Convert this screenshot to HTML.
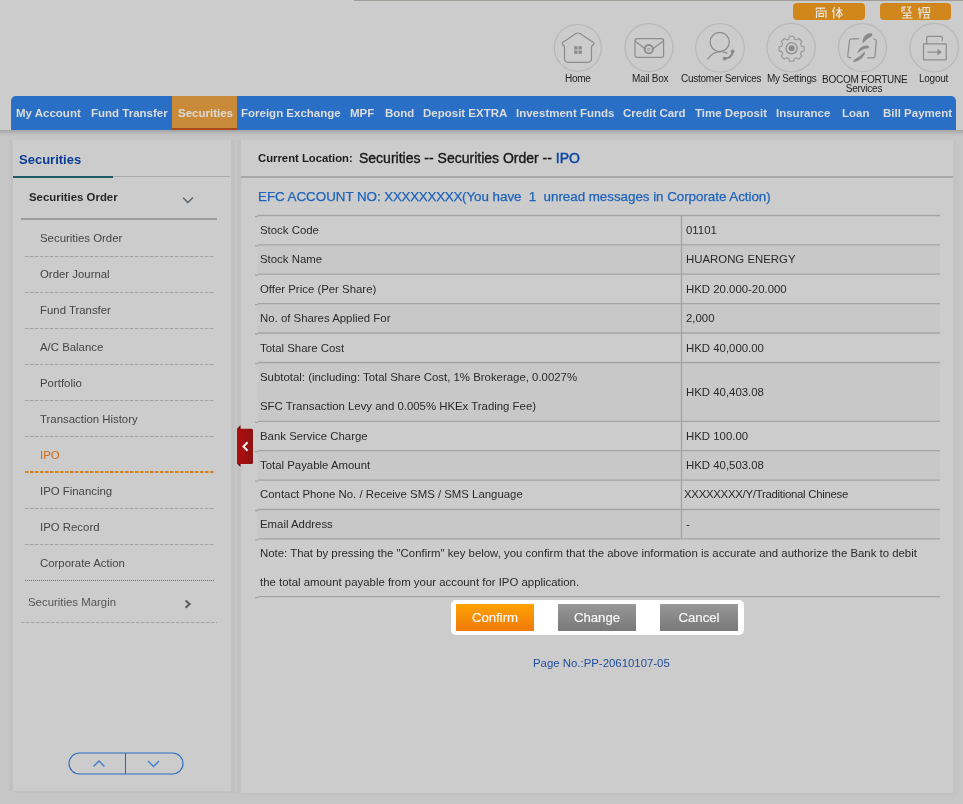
<!DOCTYPE html>
<html><head><meta charset="utf-8">
<style>
*{margin:0;padding:0;box-sizing:border-box}
html,body{width:963px;height:804px;overflow:hidden;background:#c6c6c6;font-family:"Liberation Sans",sans-serif}
.abs{position:absolute}
#hdr{position:absolute;left:0;top:0;width:963px;height:130px;background:#cccccc}
#topline{position:absolute;left:354px;top:0;width:609px;height:1px;background:#9b9d96}
.lang{position:absolute;top:3px;height:17px;background:#d0861a;border-radius:4px}
.ic{position:absolute;top:23px;width:49px;height:49px}
.lbl{position:absolute;top:74px;font-size:10px;color:#1e1e1e;text-align:center;white-space:nowrap;line-height:10.5px;letter-spacing:-0.25px}
#nav{position:absolute;left:11px;top:96px;width:945px;height:34px;background:#2a6fc6;border-radius:5px 5px 0 0}
#navshadow{position:absolute;left:0;top:130px;width:963px;height:6px;background:linear-gradient(#a4a4a4,#bcbcbc 60%,#c4c4c4)}
.ni{position:absolute;top:0;height:34px;line-height:34px;font-size:11.5px;font-weight:bold;color:#dcdcdc;white-space:nowrap}
#sec{position:absolute;left:172px;top:96px;width:65px;height:34px;background:#c98a3a;border-bottom:2px solid #a84a1a}
#side{position:absolute;left:13px;top:140px;width:218px;height:651px;background:#cccccc}
#main{position:absolute;left:241px;top:140px;width:712px;height:653px;background:#cccccc}
.si{position:absolute;left:40px;font-size:11.4px;color:#444;white-space:nowrap}
.dash{position:absolute;left:25px;width:192px;height:0;border-top:1px dashed #a9a9a9}
.row{position:absolute;left:258px;width:682px;border-top:1.3px solid #a6a6a6}
.cell{position:absolute;font-size:11.4px;color:#2a2a2a;white-space:nowrap}
.tick{position:absolute;left:255px;width:3px;height:1px;background:#a6a6a6}
.stripe{position:absolute;left:258px;width:682px;background:#c8c8c8}
.btn{position:absolute;top:604px;height:27px;line-height:27.4px;text-align:center;color:#fafafa;font-size:13.2px;-webkit-text-stroke:0.15px #fafafa}
</style></head><body><div id="wrap" style="position:absolute;left:0;top:0;width:963px;height:804px;will-change:transform">
<div id="hdr"></div>
<div id="topline"></div>
<div class="lang" style="left:793px;width:72px"></div>
<div class="lang" style="left:880px;width:71px"></div>

<svg class="abs" style="left:0;top:0" width="963" height="96" viewBox="0 0 963 96">
 <g fill="none" stroke="#b9b9b9" stroke-width="1.25">
  <circle cx="577.8" cy="47.8" r="23.5"/>
  <circle cx="649" cy="47.5" r="24"/>
  <circle cx="720" cy="47.8" r="24.3"/>
  <circle cx="791.1" cy="47.6" r="24.2"/>
  <circle cx="862.5" cy="47.6" r="24"/>
  <circle cx="934.2" cy="47.6" r="24.3"/>
 </g>
 <g fill="none" stroke="#8c8c8c" stroke-width="1.2" stroke-linejoin="round" stroke-linecap="round">
  <!-- home -->
  <path d="M564.5 46.5 L562.5 44.5 Q561.5 43.2 563 42.2 L576 33.6 Q578 32.4 580 33.6 L593 42.2 Q594.5 43.2 593.5 44.5 L591.5 46.5 L591.5 58.5 Q591.5 62.3 587.7 62.3 L568.3 62.3 Q564.5 62.3 564.5 58.5 Z"/>
  <!-- mail -->
  <rect x="635" y="38.6" width="28.6" height="18.8" rx="2.2"/>
  <path d="M635.5 41.5 L645.5 49 M662.8 41.5 L652.5 49"/>
  <circle cx="648.8" cy="49.2" r="4.2" stroke-width="1.9"/>
  <path d="M647.4 48.6 h2.8 M647.4 50.2 h2.8" stroke-width="0.7"/>
  <!-- customer -->
  <circle cx="719.7" cy="42" r="9.6"/>
  <path d="M707.7 59 Q713 51 722 51.6 Q725.5 52 727 53.3"/>
  <path d="M732.8 51.6 A7.6 7.6 0 0 1 724.8 58.4" stroke-width="2.2"/>
  <!-- gear -->
  <circle cx="791.6" cy="48.3" r="5.6"/>
  <!-- logout -->
  <rect x="923.5" y="43.9" width="22.7" height="15.9" rx="0.3"/>
  <path d="M926.7 43.6 L926.7 37.8 Q926.7 36.3 928.2 36.3 L940.8 36.3 Q942.3 36.3 942.3 37.8 L942.3 40.5"/>
  <path d="M928 52.1 L938.5 52.1"/>
  <!-- fortune brackets -->
  <path d="M858.5 38.8 L851.5 38.8 Q849.8 38.8 849.5 40.5 L847.8 55.5 Q847.5 57.6 849.8 57.6 L850.7 57.6"/>
  <path d="M873.8 39 Q876.3 39 876.3 41.5 L875 56.3 Q874.7 57.8 872.8 57.8 L867.5 57.8"/>
 </g>
 <g fill="#8a8a8a">
  <rect x="574.2" y="46.2" width="3.3" height="3.3"/><rect x="578.5" y="46.2" width="3.3" height="3.3"/>
  <rect x="574.2" y="50.5" width="3.3" height="3.3"/><rect x="578.5" y="50.5" width="3.3" height="3.3"/>
  <circle cx="791.6" cy="48.3" r="3"/>
  <circle cx="732.6" cy="51.3" r="1.9"/><circle cx="724.6" cy="58.6" r="1.9"/>
  <path d="M937.5 48.8 L941.8 52.1 L937.5 55.4 Z"/>
  <!-- fortune leaves -->
  <path d="M862.6 43.6 Q861.8 38 866.5 34.6 Q869.5 32.6 871.8 33.6 Q873.4 34.8 871.8 36.2 Q866.5 38.5 862.6 43.6 Z"/>
  <path d="M857.3 53.4 Q858.3 48.6 862.5 46.5 Q866.5 44.6 869 46.2 Q869.6 47.6 868 48.2 Q862 48.8 857.3 53.4 Z"/>
  <path d="M853.3 62 Q852.6 60.6 854.5 59.6 Q860.5 56.6 864.5 51.6 Q865.2 53 864.6 54.6 Q862.5 58.5 858.5 60.6 Q855.5 62.2 853.3 62 Z"/>
 </g>
 <!-- gear outline -->
 <path fill="none" stroke="#969696" stroke-width="1.1" stroke-linejoin="round" d="M789.5 36.3 h4.2 l0.6 2.6 l2.3 1 l2.3-1.4 l3 3 l-1.4 2.3 l1 2.3 l2.6 0.6 v4.2 l-2.6 0.6 l-1 2.3 l1.4 2.3 l-3 3 l-2.3-1.4 l-2.3 1 l-0.6 2.6 h-4.2 l-0.6-2.6 l-2.3-1 l-2.3 1.4 l-3-3 l1.4-2.3 l-1-2.3 l-2.6-0.6 v-4.2 l2.6-0.6 l1-2.3 l-1.4-2.3 l3-3 l2.3 1.4 l2.3-1 z"/>
 <!-- language chars -->
 <g fill="none" stroke="#e6e6e6" stroke-width="1.2">
  <path d="M817 7.5 l-1.2 2.2 M817 8.2 h3.5 M821.5 7.5 l-1.2 2.2 M821.5 8.2 h3.8 M816.5 11 v7 M816.5 11 h9.5 v7 M819 13.3 h4.5 v3 h-4.5 z"/>
  <path d="M834.5 7 l-2 5 M833.8 10 v8.5 M836 10 h6.5 M839.2 7 v11.5 M839 10.5 l-3 5 M839.5 10.5 l3 5 M837 16 h4.5"/>
  <path d="M902 7 h4 M902 7 v5 M904 7 v4 M907 7 h3.5 l-2 3 l2 2 M902.5 13 h9.5 M907 13 v5 M903 15.5 h8 M902 18 h10.5"/>
  <path d="M919.5 7.5 l-1 2.5 M918 10 h4 M920 10 v8.5 M918 13 h4 M923 7.5 h6.5 v5 h-6.5 z M926.2 7.5 v5 M923.5 14.5 h6 M924.5 14.5 l0.5 3.5 M928.5 14.5 l-0.5 3.5 M923 18 h7"/>
 </g>
</svg>
<div class="lbl" style="left:565px">Home</div>
<div class="lbl" style="left:632px">Mail Box</div>
<div class="lbl" style="left:681px">Customer Services</div>
<div class="lbl" style="left:767px">My Settings</div>
<div class="lbl" style="left:822px;width:84px;line-height:9.8px;top:74.5px">BOCOM FORTUNE<br>Services</div>
<div class="lbl" style="left:919px">Logout</div>

<div id="nav"></div>
<div id="sec"></div>
<div id="navshadow"></div>
<div class="ni" style="left:16px;top:96px">My Account</div>
<div class="ni" style="left:91px;top:96px">Fund Transfer</div>
<div class="ni" style="left:178px;top:96px">Securities</div>
<div class="ni" style="left:241px;top:96px">Foreign Exchange</div>
<div class="ni" style="left:350px;top:96px">MPF</div>
<div class="ni" style="left:385px;top:96px">Bond</div>
<div class="ni" style="left:423px;top:96px">Deposit EXTRA</div>
<div class="ni" style="left:516px;top:96px">Investment Funds</div>
<div class="ni" style="left:623px;top:96px">Credit Card</div>
<div class="ni" style="left:695px;top:96px">Time Deposit</div>
<div class="ni" style="left:776px;top:96px">Insurance</div>
<div class="ni" style="left:842px;top:96px">Loan</div>
<div class="ni" style="left:883px;top:96px">Bill Payment</div>

<div class="abs" style="left:9px;top:140px;width:4px;height:651px;background:#c1c1c1"></div>
<div class="abs" style="left:13px;top:791px;width:218px;height:2px;background:#c1c1c1"></div>
<div class="abs" style="left:231px;top:140px;width:4px;height:653px;background:#c1c1c1"></div>
<div class="abs" style="left:237px;top:140px;width:4px;height:653px;background:#c1c1c1"></div>
<div class="abs" style="left:241px;top:793px;width:712px;height:2px;background:#c1c1c1"></div>
<div class="abs" style="left:953px;top:140px;width:3.5px;height:655px;background:#c3c3c3"></div>
<div id="side"></div>
<div id="main"></div>
<!-- sidebar content -->
<div class="abs" style="left:19px;top:152px;font-size:13px;font-weight:bold;color:#0a3c96;white-space:nowrap">Securities</div>
<div class="abs" style="left:13px;top:176px;width:217px;height:1px;background:#a9a9a9"></div>
<div class="abs" style="left:13px;top:176px;width:100px;height:2px;background:#1d5a66"></div>
<div class="abs" style="left:29px;top:191px;font-size:11.4px;font-weight:bold;color:#262626;white-space:nowrap">Securities Order</div>
<svg class="abs" style="left:182px;top:195px" width="14" height="10"><path d="M1.5 4 L5.8 8.3 L11.5 3" fill="none" stroke="#c6ccd4" stroke-width="1.8" transform="translate(0,1)"/><path d="M1.2 2.8 L5.8 7.5 L11 2.5" fill="none" stroke="#5c5c5c" stroke-width="1.3"/></svg>
<div class="abs" style="left:21px;top:218px;width:196px;height:2px;background:#9c9c9c"></div>
<svg class="abs" style="left:0;top:240px" width="240" height="400">
 <g stroke="#a3a3a3" stroke-width="1" stroke-dasharray="3.5 1.5">
  <path d="M25 16.5 H214"/><path d="M25 52.5 H214"/><path d="M25 88.5 H214"/><path d="M25 124.5 H214"/>
  <path d="M25 160.5 H214"/><path d="M25 196.5 H214"/><path d="M25 268.5 H214"/><path d="M25 304.5 H214"/>
  <path d="M21 382.5 H217"/>
 </g>
 <path d="M25 232 H214" stroke="#d9801e" stroke-width="2" stroke-dasharray="3.6 1.4"/>
 <path d="M25 340.5 H214" stroke="#6e6e6e" stroke-width="1" stroke-dasharray="1 1"/>
</svg>
<div class="si" style="top:232px">Securities Order</div>
<div class="si" style="top:268px">Order Journal</div>
<div class="si" style="top:304px">Fund Transfer</div>
<div class="si" style="top:341px">A/C Balance</div>
<div class="si" style="top:377px">Portfolio</div>
<div class="si" style="top:413px">Transaction History</div>
<div class="si" style="top:449px;color:#d0680f">IPO</div>
<div class="si" style="top:485px">IPO Financing</div>
<div class="si" style="top:521px">IPO Record</div>
<div class="si" style="top:557px">Corporate Action</div>
<div class="si" style="left:28px;top:596px;color:#555">Securities Margin</div>
<svg class="abs" style="left:182px;top:597px" width="10" height="14"><path d="M3.6 3.6 L7.6 7.1 L3.6 10.7" fill="none" stroke="#5a5a5a" stroke-width="2"/></svg>
<svg class="abs" style="left:68px;top:752px" width="116" height="23">
 <path d="M11.5 1 H104.5 A10.5 10.5 0 0 1 104.5 22 H11.5 A10.5 10.5 0 0 1 11.5 1 Z" fill="none" stroke="#2b6cc2" stroke-width="1.1"/>
 <path d="M57.5 1 V22" stroke="#2b6cc2" stroke-width="1.1"/>
 <path d="M25.5 14.5 L31 9 L36.5 14.5" fill="none" stroke="#3f7fcc" stroke-width="1.4"/>
 <path d="M80 9 L85.5 14.5 L91 9" fill="none" stroke="#3f7fcc" stroke-width="1.4"/>
</svg>
<!-- main content -->
<div class="abs" style="left:258px;top:152px;font-size:11.3px;font-weight:bold;color:#1e1e1e;white-space:nowrap">Current Location:</div>
<div class="abs" style="left:359px;top:150px;font-size:14px;color:#1a1a1a;-webkit-text-stroke:0.35px #1a1a1a;white-space:nowrap">Securities -- Securities Order -- <span style="color:#0b46a3;-webkit-text-stroke:0.45px #0b46a3">IPO</span></div>
<div class="abs" style="left:241px;top:176px;width:712px;height:2px;background:#a8a8a8"></div>
<div class="abs" style="left:258px;top:189px;font-size:13.4px;color:#1d63bb;-webkit-text-stroke:0.25px #1d63bb;letter-spacing:-0.04px;white-space:nowrap">EFC ACCOUNT NO: <span style="letter-spacing:-0.3px">XXXXXXXXX</span>(You have&nbsp; 1&nbsp; unread messages in Corporate Action)</div>
<!-- stripes -->
<div class="stripe" style="top:245px;height:29px"></div>
<div class="stripe" style="top:304px;height:29px"></div>
<div class="stripe" style="top:363px;height:58px"></div>
<div class="stripe" style="top:451px;height:29px"></div>
<div class="stripe" style="top:510px;height:29px"></div>
<svg class="abs" style="left:0;top:0" width="963" height="804">
 <g stroke="#a4a4a4" stroke-width="1.3">
  <path d="M258 215.5 H940 M255 216.5 H258"/>
  <path d="M258 244.8 H940 M255 245.8 H258"/>
  <path d="M258 274.2 H940 M255 275.2 H258"/>
  <path d="M258 303.6 H940 M255 304.6 H258"/>
  <path d="M258 333 H940 M255 334 H258"/>
  <path d="M258 362.5 H940 M255 363.5 H258"/>
  <path d="M258 421.3 H940 M255 422.3 H258"/>
  <path d="M258 450.7 H940 M255 451.7 H258"/>
  <path d="M258 480.1 H940 M255 481.1 H258"/>
  <path d="M258 509.5 H940 M255 510.5 H258"/>
  <path d="M258 538.8 H940 M255 539.8 H258"/>
  <path d="M258 596.7 H940 M255 597.7 H258"/>
  <path d="M681.5 215.5 V538.8"/>
 </g>
</svg>
<div class="cell" style="left:260px;top:224px">Stock Code</div>
<div class="cell" style="left:686px;top:224px">01101</div>
<div class="cell" style="left:260px;top:253px">Stock Name</div>
<div class="cell" style="left:686px;top:253px">HUARONG ENERGY</div>
<div class="cell" style="left:260px;top:283px">Offer Price (Per Share)</div>
<div class="cell" style="left:686px;top:283px">HKD 20.000-20.000</div>
<div class="cell" style="left:260px;top:312px">No. of Shares Applied For</div>
<div class="cell" style="left:686px;top:312px">2,000</div>
<div class="cell" style="left:260px;top:342px">Total Share Cost</div>
<div class="cell" style="left:686px;top:342px">HKD 40,000.00</div>
<div class="cell" style="left:260px;top:371px">Subtotal: (including: Total Share Cost, 1% Brokerage, 0.0027%</div>
<div class="cell" style="left:260px;top:400px">SFC Transaction Levy and 0.005% HKEx Trading Fee)</div>
<div class="cell" style="left:686px;top:386px">HKD 40,403.08</div>
<div class="cell" style="left:260px;top:430px">Bank Service Charge</div>
<div class="cell" style="left:686px;top:430px">HKD 100.00</div>
<div class="cell" style="left:260px;top:459px">Total Payable Amount</div>
<div class="cell" style="left:686px;top:459px">HKD 40,503.08</div>
<div class="cell" style="left:260px;top:488px">Contact Phone No. / Receive SMS / SMS Language</div>
<div class="cell" style="left:684px;top:488px;letter-spacing:-0.28px">XXXXXXXX/Y/Traditional Chinese</div>
<div class="cell" style="left:260px;top:518px">Email Address</div>
<div class="cell" style="left:686px;top:518px">-</div>
<div class="cell" style="left:260px;top:547px">Note: That by pressing the "Confirm" key below, you confirm that the above information is accurate and authorize the Bank to debit</div>
<div class="cell" style="left:260px;top:576px">the total amount payable from your account for IPO application.</div>
<!-- buttons -->
<div class="abs" style="left:451px;top:599.5px;width:293px;height:35.5px;background:#fff;border-radius:5px"></div>
<div class="btn" style="left:456px;width:78px;background:linear-gradient(#ffa200,#f07a0c)">Confirm</div>
<div class="btn" style="left:558px;width:78px;background:linear-gradient(#9a9a9a,#939393 15%,#8d8d8d 30%,#888 48%,#838383 65%,#7e7e7e 82%,#7a7a7a)">Change</div>
<div class="btn" style="left:660px;width:78px;background:linear-gradient(#9a9a9a,#939393 15%,#8d8d8d 30%,#888 48%,#838383 65%,#7e7e7e 82%,#7a7a7a)">Cancel</div>
<div class="abs" style="left:533px;top:657px;font-size:11.4px;color:#1d4d9c;white-space:nowrap">Page No.:PP-20610107-05</div>
<!-- collapse tab -->
<svg class="abs" style="left:236px;top:424px" width="18" height="44">
 <defs><linearGradient id="rg" x1="0" x2="1"><stop offset="0" stop-color="#b30c0c"/><stop offset="1" stop-color="#8b1212"/></linearGradient></defs>
 <path d="M1 5 L4.5 1 V5 Z" fill="#6a0a0a"/>
 <path d="M1 39.5 L4.5 43 V39.5 Z" fill="#6a0a0a"/>
 <path d="M1 4.8 H15.5 Q17 4.8 17 6.3 V38.5 Q17 40 15.5 40 H1 Z" fill="url(#rg)"/>
 <path d="M11.6 18.3 L7.4 22.5 L11.6 26.7" fill="none" stroke="#f2f2f2" stroke-width="2"/>
</svg>

</div></body></html>
